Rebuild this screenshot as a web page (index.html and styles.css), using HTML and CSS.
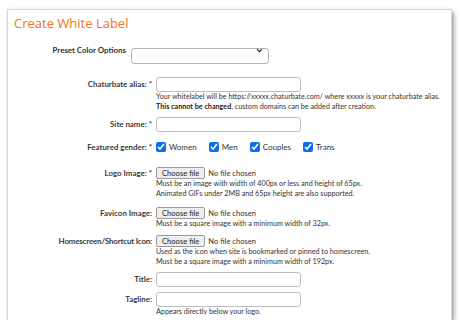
FILE: index.html
```html
<!DOCTYPE html>
<html>
<head>
<meta charset="utf-8">
<link rel="stylesheet" href="styles.css">
</head>
<body>
<div class="card">
  <h1 class="title">Create White Label</h1>

  <div class="preset">
    <label class="preset-label">Preset Color Options</label>
    <div class="select-wrap">
      <select class="select"><option></option></select>
      <svg class="chev" width="7" height="5" viewBox="0 0 7 5"><path d="M1 1.2 L3.5 3.6 L6 1.2" fill="none" stroke="#333" stroke-width="1.3"/></svg>
    </div>
  </div>

  <div class="row row-alias">
    <label class="lbl lbl-input">Chaturbate alias: *</label>
    <div class="field">
      <input class="text" type="text">
      <div class="help">Your whitelabel will be https://xxxxx.chaturbate.com/ where xxxxx is your chaturbate alias.</div>
      <div class="help"><b>This cannot be changed</b>, custom domains can be added after creation.</div>
    </div>
  </div>

  <div class="row row-site">
    <label class="lbl lbl-input">Site name: *</label>
    <div class="field"><input class="text" type="text"></div>
  </div>

  <div class="row row-gender">
    <label class="lbl lbl-check">Featured gender: *</label>
    <div class="field checks">
      <label class="check"><input type="checkbox" checked><span>Women</span></label>
      <label class="check"><input type="checkbox" checked><span>Men</span></label>
      <label class="check"><input type="checkbox" checked><span>Couples</span></label>
      <label class="check"><input type="checkbox" checked><span>Trans</span></label>
    </div>
  </div>

  <div class="row row-logo">
    <label class="lbl lbl-file">Logo Image: *</label>
    <div class="field">
      <label class="file"><input type="file" class="file-input"><span class="file-btn">Choose file</span><span class="file-name">No file chosen</span></label>
      <div class="help">Must be an image with width of 400px or less and height of 65px.</div>
      <div class="help">Animated GIFs under 2MB and 65px height are also supported.</div>
    </div>
  </div>

  <div class="row row-favicon">
    <label class="lbl lbl-file">Favicon Image:</label>
    <div class="field">
      <label class="file"><input type="file" class="file-input"><span class="file-btn">Choose file</span><span class="file-name">No file chosen</span></label>
      <div class="help">Must be a square image with a minimum width of 32px.</div>
    </div>
  </div>

  <div class="row row-home">
    <label class="lbl lbl-file lbl-long">Homescreen/Shortcut Icon:</label>
    <div class="field">
      <label class="file"><input type="file" class="file-input"><span class="file-btn">Choose file</span><span class="file-name">No file chosen</span></label>
      <div class="help">Used as the icon when site is bookmarked or pinned to homescreen.</div>
      <div class="help">Must be a square image with a minimum width of 192px.</div>
    </div>
  </div>

  <div class="row row-title">
    <label class="lbl lbl-input">Title:</label>
    <div class="field"><input class="text" type="text"></div>
  </div>

  <div class="row row-tagline">
    <label class="lbl lbl-input">Tagline:</label>
    <div class="field">
      <input class="text" type="text">
      <div class="help">Appears directly below your logo.</div>
    </div>
  </div>
</div>
</body>
</html>
```

FILE: styles.css
```css
html, body {
  margin: 0;
  padding: 0;
  background: #ffffff;
}

body {
  font-family: Lato, "Open Sans", sans-serif;
  color: #3a3a3a;
}

.card {
  margin: 10px 0 0 8px;
  width: 443px;
  height: 310px;
  box-sizing: border-box;
  padding: 3px 6px 0 6px;
  background: #ffffff;
  box-shadow: 0 0 0 1px #d6d6d6, 2px 2px 5px rgba(0, 0, 0, 0.55);
  overflow: hidden;
}

.title {
  margin: 0;
  font-family: "Open Sans", sans-serif;
  font-size: 13px;
  line-height: 20px;
  font-weight: 500;
  color: #f47321;
}

.preset {
  margin-top: 9px;
  display: grid;
  grid-template-columns: 112px 138px;
  column-gap: 5px;
  align-items: center;
}

.preset-label {
  text-align: right;
  font-size: 7.9px;
  font-weight: 700;
  color: #333333;
}

.select-wrap {
  position: relative;
  width: 138px;
  height: 16px;
}

.select {
  appearance: none;
  width: 138px;
  height: 16px;
  box-sizing: border-box;
  margin: 0;
  border: 1px solid #b5b5b5;
  border-radius: 3px;
  background: #ffffff;
  font-size: 8px;
}

.chev {
  position: absolute;
  right: 6px;
  top: 6px;
}

.row {
  display: grid;
  grid-template-columns: 138px 1fr;
  column-gap: 4px;
  align-items: start;
}

.row-alias { margin-top: 19px; }
.row-site { margin-top: 5px; }
.row-gender { margin-top: 9px; }
.row-logo { margin-top: 14px; }
.row-favicon { margin-top: 8px; }
.row-home { margin-top: 6px; }
.row-title { margin-top: 5px; }
.row-tagline { margin-top: 5px; }

.lbl {
  text-align: right;
  font-size: 7.9px;
  font-weight: 700;
  color: #3a3a3a;
  white-space: nowrap;
}

.lbl-long { letter-spacing: -0.15px; }

.lbl-input { line-height: 15px; }
.lbl-check { line-height: 12px; }
.lbl-file { line-height: 12px; }

.field {
  display: flex;
  flex-direction: column;
  align-items: flex-start;
}

.text {
  width: 145px;
  height: 15px;
  box-sizing: border-box;
  margin: 0;
  border: 1px solid #bdbdbd;
  border-radius: 3px;
  background: #ffffff;
}

.help {
  font-size: 7.2px;
  line-height: 10px;
  color: #333333;
  white-space: nowrap;
}

.help b {
  font-weight: 700;
  color: #222222;
}

.checks {
  flex-direction: row;
  align-items: center;
  gap: 12px;
  height: 12px;
}

.check {
  display: flex;
  align-items: center;
  gap: 3px;
  font-size: 8px;
  font-weight: 400;
  color: #333333;
}

.check input {
  width: 10px;
  height: 10px;
  margin: 0;
  accent-color: #0a6ef2;
}

.file {
  display: flex;
  align-items: center;
  height: 12px;
  font-size: 7.6px;
  color: #333333;
}

.file-input {
  display: none;
}

.file-btn {
  box-sizing: border-box;
  height: 12px;
  line-height: 10px;
  margin-right: 3px;
  padding: 0 5px;
  color: #222222;
  background: #efefef;
  border: 1px solid #9a9a9a;
  border-radius: 2px;
}
```
